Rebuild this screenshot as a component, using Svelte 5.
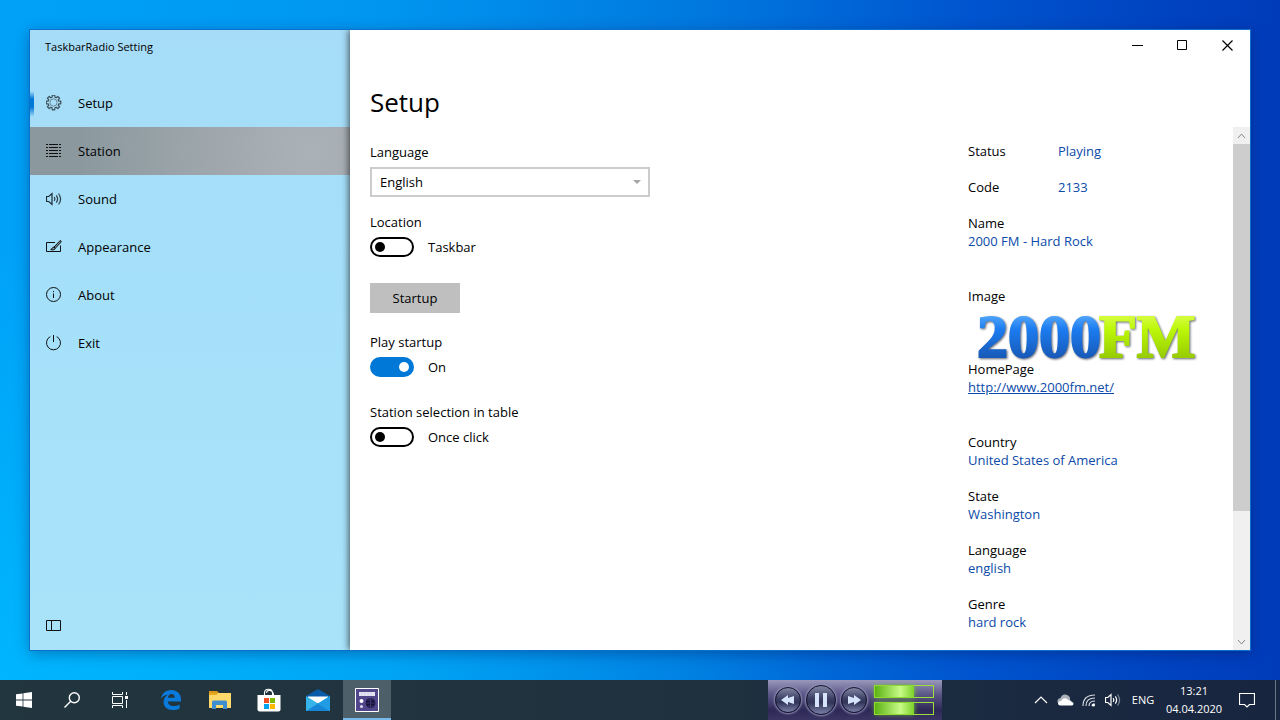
<script>
    let items = [
        { id: "setup", label: "Setup" },
        { id: "station", label: "Station" },
        { id: "sound", label: "Sound" },
        { id: "appearance", label: "Appearance" },
        { id: "about", label: "About" },
        { id: "exit", label: "Exit" }
    ]
    let current = "setup"
    let hovered = "station"
    let language = "English"
    let inTray = false
    let playStartup = true
    let doubleClick = false
    let levels = [68, 68]
    let thumb = 75
    let details = [
        { name: "Country", value: "United States of America" },
        { name: "State", value: "Washington" },
        { name: "Language", value: "english" },
        { name: "Genre", value: "hard rock" }
    ]
    // outline of the eight-toothed gear
    let gear = ""
    for(let i = 0;i < 8;i++){
        for(let [r, a] of [[5.4, -15], [7.4, -10], [7.4, 10], [5.4, 15]]){
            let rad = (i * 45 + a) * Math.PI / 180
            gear += `${(7.5 + r * Math.sin(rad)).toFixed(2)},${(7.5 - r * Math.cos(rad)).toFixed(2)} `
        }
    }
</script>

<div class="desktop">
    <div class="wallpaper">
        <div class="window">
            <aside>
                <div class="caption">TaskbarRadio Setting</div>
                <nav>
                    {#each items as item}
                    <button class="item" class:current={current == item.id} class:hovered={hovered == item.id} on:click={() => current = item.id}>
                        <svg width="16" height="16" viewBox="0 0 16 16" fill="none" stroke="#111">
                            {#if item.id == "setup"}
                            <polygon points={gear} stroke="#3c505c" stroke-width="1.2" stroke-linejoin="round" />
                            <circle cx="7.5" cy="7.5" r="3.6" stroke="#6f8793" />
                            {:else if item.id == "station"}
                            <path d="M0 1.5h2M3 1.5h9M13 1.5h2M0 4.5h2M3 4.5h9M13 4.5h2M0 7.5h2M3 7.5h9M13 7.5h2M0 10.5h2M3 10.5h9M13 10.5h2M0 13.5h2M3 13.5h9M13 13.5h2" />
                            {:else if item.id == "sound"}
                            <path d="M.5 5.5h2.3L6 2.6v10.8L2.8 10.5H.5z" stroke="#1d2b32" stroke-width="1.2" />
                            <path d="M8.2 6.2q1.3 1.8 0 3.6M10.3 4.4q2.6 3.6 0 7.2M12.5 2.5q4.2 5.500 0 11" stroke="#2c3e47" stroke-width="1.200" />
                            {:else if item.id == "appearance"}
                            <path d="M9 3.5H.5v9h14V6.5" />
                            <path d="M14.4 1.3 8 8l1.3 1.3 6-6.5zM8 8c-2 .1-1.5 2-3.3 2.5 1.8.8 4.6.3 4.6-1.2" fill="#74919f" />
                            {:else if item.id == "about"}
                            <circle cx="7.5" cy="7.5" r="7" /><path d="M7.5 6.5V11M7.5 4v1.2" />
                            {:else}
                            <path d="M4.3 1.6a7 7 0 1 0 6.4 0M7.5 0v7" />
                            {/if}
                        </svg>
                        <span>{item.label}</span>
                    </button>
                    {/each}
                </nav>
                <button class="item fold" aria-label="Toggle pane">
                    <svg width="16" height="16" viewBox="0 0 16 16" fill="none" stroke="#111"><path d="M.5 2.5h14v10H.5zM5.5 2.5v10" /></svg>
                </button>
            </aside>

            <main>
                <div class="controls">
                    <button aria-label="Minimize"><svg width="11" height="11" fill="none" stroke="#000"><path d="M0 5.5h11" /></svg></button>
                    <button aria-label="Maximize"><svg width="11" height="11" fill="none" stroke="#000"><path d="M.5.5h9v9h-9z" /></svg></button>
                    <button aria-label="Close"><svg width="11" height="11" fill="none" stroke="#000" stroke-width="1.2"><path d="M.5.5l10 10M10.5.5l-10 10" /></svg></button>
                </div>
                <h1>Setup</h1>
                <div class="body">
                    <form>
                        <div class="field">
                            <label for="language">Language</label>
                            <div class="combo">
                                <select id="language" bind:value={language}>
                                    <option>English</option>
                                    <option>Deutsch</option>
                                </select>
                                <svg width="8" height="4" viewBox="0 0 8 4"><path d="M0 0h8L4 4z" fill="#a6a6a6" /></svg>
                            </div>
                        </div>
                        <div class="field">
                            <label for="location">Location</label>
                            <div class="switch"><input type="checkbox" id="location" bind:checked={inTray}><span>Taskbar</span></div>
                        </div>
                        <div class="action">
                            <button type="button">Startup</button>
                        </div>
                        <div class="field">
                            <label for="play">Play startup</label>
                            <div class="switch"><input type="checkbox" id="play" bind:checked={playStartup}><span>On</span></div>
                        </div>
                        <div class="field">
                            <label for="click">Station selection in table</label>
                            <div class="switch"><input type="checkbox" id="click" bind:checked={doubleClick}><span>Once click</span></div>
                        </div>
                    </form>

                    <dl>
                        <div class="pair"><dt>Status</dt><dd>Playing</dd></div>
                        <div class="pair"><dt>Code</dt><dd>2133</dd></div>
                        <div class="tall"><dt>Name</dt><dd>2000 FM - Hard Rock</dd></div>
                        <div class="picture">
                            <dt>Image</dt>
                            <dd>
                                <svg width="232" height="55" viewBox="0 0 232 55" role="img" aria-label="2000FM">
                                    <defs>
                                        <linearGradient id="blue" x1="0" y1="0" x2="0" y2="1">
                                            <stop offset=".1" stop-color="#6bbaff" />
                                            <stop offset=".4" stop-color="#1c7cf0" />
                                            <stop offset=".85" stop-color="#1757b4" />
                                        </linearGradient>
                                        <linearGradient id="lime" x1="0" y1="0" x2="0" y2="1">
                                            <stop offset=".1" stop-color="#e2ff60" />
                                            <stop offset=".4" stop-color="#bdf808" />
                                            <stop offset=".85" stop-color="#94c800" />
                                        </linearGradient>
                                    </defs>
                                    <text x="9" y="52" fill="url(#blue)" stroke="url(#blue)">2000</text>
                                    <text x="131" y="52" fill="url(#lime)" stroke="url(#lime)">FM</text>
                                </svg>
                            </dd>
                        </div>
                        <div class="tall"><dt>HomePage</dt><dd><a href="http://www.2000fm.net/">http://www.2000fm.net/</a></dd></div>
                        {#each details as d}
                        <div><dt>{d.name}</dt><dd>{d.value}</dd></div>
                        {/each}
                    </dl>

                    <div class="scroll">
                        <button aria-label="Scroll up"><svg width="9" height="6" fill="none" stroke="#888"><path d="M1 5l3.5-4L8 5" /></svg></button>
                        <div class="track"><div class="thumb" style="height: {thumb}%"></div></div>
                        <button aria-label="Scroll down"><svg width="9" height="6" fill="none" stroke="#888"><path d="M1 1l3.5 4L8 1" /></svg></button>
                    </div>
                </div>
            </main>
        </div>
    </div>

    <footer>
        <div class="system">
            <button aria-label="Start">
                <svg width="16" height="16" viewBox="0 0 16 16" fill="#fff"><path d="M0 2.3 6.6 1.4v6.2H0zM7.4 1.2 16 0v7.6H7.4zM0 8.4h6.6v6.2L0 13.7zM7.4 8.4H16V16l-8.6-1.2z" /></svg>
            </button>
            <button aria-label="Search">
                <svg width="16" height="16" viewBox="0 0 16 16" fill="none" stroke="#fff" stroke-width="1.4"><circle cx="10.3" cy="5.7" r="5" /><path d="M6.7 9.3.5 15.5" /></svg>
            </button>
            <button aria-label="Task View">
                <svg width="16" height="16" viewBox="0 0 16 16" fill="none" stroke="#fff"><path d="M.5 0v2.5h10V0M.5 4.5h10v7H.5zM.5 16v-2.5h10V16M14.5 0v3M14.5 8v8" /><path d="M13 4h3v3h-3z" fill="#fff" stroke="none" /></svg>
            </button>
        </div>
        <div class="apps">
            <button aria-label="Edge">
                <svg width="20" height="20" viewBox="0 0 20 20" fill="#0a7bdc"><path d="M0 8.8C.8 3.6 4.6 0 10.2 0 16.5 0 20 4.3 20 9.5v2.1H6.8c.2 3.1 2.8 4.5 5.8 4.5 2.3 0 4.2-.6 6-1.700v4.1c-2 1-4.4 1.5-6.9 1.5-5.2 0-9.1-2.8-9.1-8 0-3 1.8-5.8 4.3-7.2C4.300 4.900 1.500 6.200 0 8.800zM6.900 7.800h6.900c0-2.300-1-3.800-3.300-3.800S7.200 5.800 6.900 7.800z" /></svg>
            </button>
            <button aria-label="File Explorer">
                <svg width="22" height="18" viewBox="0 0 22 18"><path d="M0 0h8l2 2H0z" fill="#d99a16" /><path d="M0 2h22v15H0z" fill="#ffda6b" /><path d="M0 2h9L7.5 4H0z" fill="#e5ab22" /><path d="M3 18V11q0-1.500 1.500-1.500h12q1.500 0 1.500 1.500v7h-4v-4H7v4z" fill="#3f8fd0" /></svg>
            </button>
            <button aria-label="Store">
                <svg width="24" height="24" viewBox="0 0 24 24"><path d="M7.5 8V5q0-3.800 4-3.800t4 3.800v3M9.500 5Q10 2 13 2.500t3.500 4V8" fill="none" stroke="#fff" stroke-width="1.100" /><path d="M.5 7h23v14.500q0 2-2 2h-19q-2 0-2-2z" fill="#fff" /><path d="M7 10h5v5H7z" fill="#f25022" /><path d="M13 10h5v5h-5z" fill="#7fba00" /><path d="M7 16h5v5H7z" fill="#00a4ef" /><path d="M13 16h5v5h-5z" fill="#ffb900" /></svg>
            </button>
            <button aria-label="Mail">
                <svg width="24" height="22" viewBox="0 0 24 22"><path d="M0 7 12 0l12 7v4H0z" fill="#0a5ca8" /><path d="M2 7.500h20V14H2z" fill="#fff" /><path d="M0 7l12 7.500L24 7v15H0z" fill="#36b4ea" /><path d="M0 22 12 14.500 24 22z" fill="#1587d6" /><path d="M12 14.500 24 7v15z" fill="#1f9ce4" /></svg>
            </button>
            <button class="active" aria-label="TaskbarRadio">
                <svg width="24" height="24" viewBox="0 0 24 24"><path d="M.5.5h23v23H.5z" fill="#51458c" stroke="#fff" /><path d="M4 4h16v4H4z" fill="#e4e3f4" /><path d="M7 4v4M10 4v4M13 4v4M16 4v4" stroke="#c4c2de" stroke-width=".6" /><circle cx="6.5" cy="13" r="2" fill="#fff" /><circle cx="6.5" cy="18.500" r="1.500" fill="#d9d8ee" /><circle cx="15.500" cy="15" r="4.800" fill="#17143c" /><path d="M11 15h9M15.500 10.500v9M12.500 12h6M12.500 18h6" stroke="#51458c" stroke-width=".6" /></svg>
            </button>
        </div>

        <div class="player">
            <button class="round" aria-label="Previous"><svg width="14" height="10" fill="#d5e4fa"><path d="M7 0v3l6-2v8L7 7v3L0 5z" /></svg></button>
            <button class="round big" aria-label="Pause"><svg width="14" height="14" fill="#d5e4fa"><path d="M1 0h4v14H1zM9 0h4v14H9z" /></svg></button>
            <button class="round" aria-label="Next"><svg width="14" height="10" fill="#d5e4fa"><path d="M7 0v3L1 1v8l6-2v3l7-5z" /></svg></button>
            <div class="meters">
                {#each levels as level}
                <div class="meter"><div style="width: {level}%"></div></div>
                {/each}
            </div>
        </div>

        <div class="tray">
            <button aria-label="Hidden icons"><svg width="14" height="8" fill="none" stroke="#fff" stroke-width="1.2"><path d="M1 7l6-6 6 6" /></svg></button>
            <button aria-label="OneDrive"><svg width="17" height="12" viewBox="0 0 17 12"><path d="M2 9Q0 9 .5 6.500T3.500 4Q5 0 8.500.500t4.500 3.500v5z" fill="#aab0b8" /><path d="M3.500 11.500Q1 11.500 1 9.500t3-2.500q1.500-3.500 5-2.500 1.500.3 2.500 1.700 3-.2 3.300 1.800 1.900.3 1.700 1.900-.2 1.600-2 1.600z" fill="#fff" /></svg></button>
            <button aria-label="Network"><svg width="14" height="14" viewBox="0 0 14 14" fill="none" stroke="#d5dae0" stroke-width="1.2"><path d="M1 13Q1 2 13 2M4 13Q4 5 13 5M7 13q0-5 6-5M10 13q0-2 3-2" /><circle cx="11.500" cy="12" r="1.500" fill="#fff" stroke="none" /></svg></button>
            <button aria-label="Volume"><svg width="16" height="16" viewBox="0 0 16 16" fill="none" stroke="#fff" stroke-width="1.2"><path d="M.5 5.500h2.300L6 2.600v10.800l-3.200-2.900H.5z" /><path d="M8.200 6.200q1.300 1.800 0 3.600M10.300 4.400q2.600 3.600 0 7.200" /><path d="M12.500 2.500q4.200 5.500 0 11" stroke="#7d8894" /></svg></button>
            <button class="lang">ENG</button>
            <button class="clock"><span>13:21</span><span>04.04.2020</span></button>
            <button class="notes" aria-label="Notifications"><svg width="16" height="16" viewBox="0 0 16 16" fill="none" stroke="#fff" stroke-width="1.2"><path d="M.5 1.500h15v11h-5L8 15l-2.500-2.500h-5z" /></svg></button>
            <button class="peek" aria-label="Show desktop"></button>
        </div>
    </footer>
</div>

<style>
    :global(body){
        margin: 0;
    }
    .desktop{
        min-height: 100vh;
        display: flex;
        flex-direction: column;
        font-family: "Open Sans", "Noto Sans", sans-serif;
        font-size: 13px;
        line-height: 18px;
        color: #000;
    }
    button, select{
        font: inherit;
        color: inherit;
        border: 0;
        padding: 0;
        background: none;
    }
    svg{
        display: block;
        flex: none;
    }
    .wallpaper{
        flex: 1;
        display: flex;
        padding: 30px;
        background:
            radial-gradient(ellipse at 0% 100%, rgba(0,190,255,.7), transparent 45%),
            linear-gradient(to right, #00a2f8 0%, #0096f0 30%, #0078de 55%, #0054cf 76%, #0042c0 92%, #003cba 100%);
    }
    .window{
        flex: 1;
        display: flex;
        box-shadow: 0 0 0 1px #0a70cc, 0 3px 14px rgba(0,20,80,.4);
    }
    aside{
        width: 320px;
        flex: none;
        display: flex;
        flex-direction: column;
        background: linear-gradient(#a6dcf7, #a5e0fa 40%, #a9e3fa);
    }
    .caption{
        height: 34px;
        line-height: 34px;
        padding-left: 15px;
        margin-bottom: 15px;
        font-size: 11px;
    }
    .item{
        width: 100%;
        height: 48px;
        display: flex;
        align-items: center;
        gap: 16px;
        padding-left: 16px;
        text-align: left;
    }
    .current{
        background: linear-gradient(transparent 12px, #0078d7 20px, #0078d7 28px, transparent 38px) left / 4px 100% no-repeat;
    }
    .hovered{
        background: radial-gradient(circle at 280px 24px, #abb2b8 0, #a0a8ad 90px, #8b999f 230px);
    }
    .fold{
        margin-top: auto;
    }
    main{
        flex: 1;
        display: flex;
        flex-direction: column;
        background: #fff;
        box-shadow: -1px 0 7px rgba(0,0,0,.65);
        clip-path: inset(0 0 0 -12px);
    }
    .controls{
        display: flex;
        justify-content: flex-end;
    }
    .controls button{
        width: 45px;
        height: 30px;
        display: grid;
        place-items: center;
    }
    h1{
        margin: 24px 20px 7px;
        font-size: 26px;
        line-height: 36px;
        font-weight: 400;
    }
    .body{
        flex: 1;
        display: flex;
    }
    form{
        flex: 1;
        padding: 16px 20px 0;
    }
    .field{
        height: 70px;
    }
    .field label{
        display: block;
        margin-bottom: 6px;
    }
    .combo{
        position: relative;
        width: 280px;
    }
    .combo select{
        width: 100%;
        height: 30px;
        padding: 0 8px;
        border: 2px solid #ccc;
        border-radius: 0;
        background: #fff;
        appearance: none;
    }
    .combo svg{
        position: absolute;
        right: 9px;
        top: 13px;
        pointer-events: none;
    }
    .switch{
        display: flex;
        align-items: center;
        gap: 14px;
    }
    .switch input{
        appearance: none;
        width: 44px;
        height: 20px;
        margin: 0;
        display: flex;
        align-items: center;
        padding: 0 3px;
        box-sizing: border-box;
        border: 2px solid #000;
        border-radius: 10px;
    }
    .switch input::before{
        content: "";
        width: 10px;
        height: 10px;
        border-radius: 50%;
        background: #000;
    }
    .switch input:checked{
        justify-content: flex-end;
        background: #0078d7;
        border-color: #0078d7;
    }
    .switch input:checked::before{
        background: #fff;
    }
    .action{
        height: 50px;
    }
    .action button{
        width: 90px;
        height: 30px;
        background: #bfbfbf;
    }
    dl{
        width: 265px;
        margin: 0;
        padding-top: 15px;
    }
    dl > div{
        margin-bottom: 18px;
    }
    dl > .tall{
        margin-bottom: 37px;
    }
    dl > .picture{
        margin-bottom: 0;
    }
    dl > .pair{
        display: flex;
    }
    .pair dt{
        width: 90px;
    }
    dd{
        margin: 0;
        color: #0b4aa8;
    }
    dd a{
        color: inherit;
    }
    .picture svg{
        overflow: visible;
        filter: drop-shadow(1px 1px 1px rgba(60,65,80,.8));
    }
    .picture text{
        font-family: "Liberation Serif", serif;
        font-weight: 700;
        font-size: 62px;
        stroke-width: 2px;
    }
    .scroll{
        width: 17px;
        display: flex;
        flex-direction: column;
        background: #f0f0f0;
    }
    .scroll button{
        height: 17px;
        display: grid;
        place-items: center;
    }
    .track{
        flex: 1;
    }
    .thumb{
        background: #cdcdcd;
    }
    footer{
        height: 40px;
        display: flex;
        color: #fff;
        background: linear-gradient(to right, #22363f, #1f313e 55%, #1a2940 80%, #18253f);
    }
    footer button{
        display: grid;
        place-items: center;
    }
    .system, .apps, .tray{
        display: flex;
    }
    .system button, .apps button{
        width: 48px;
    }
    .apps{
        gap: 1px;
        margin-left: 3px;
    }
    .apps .active{
        background: #4d5f69;
        box-shadow: inset 0 -2px #76b9ed;
    }
    .player{
        width: 174px;
        margin-left: auto;
        display: flex;
        align-items: center;
        gap: 5px;
        padding: 0 8px 0 7px;
        box-sizing: border-box;
        background: linear-gradient(#9a98bc, #5d5888 35%, #2e2856 75%, #3b3564);
    }
    .round{
        flex: none;
        width: 26px;
        height: 26px;
        border-radius: 50%;
        border: 1px solid #17142f;
        background: linear-gradient(#8286a4, #3b3f64 45%, #323558 60%, #7980a8);
        box-shadow: 0 0 2px 1px #8e8fb5;
    }
    .big{
        width: 30px;
        height: 30px;
    }
    .meters{
        flex: 1;
        display: grid;
        gap: 4px;
        margin-left: 2px;
    }
    .meter{
        height: 11px;
        border: 1px solid #9be03a;
    }
    .meter div{
        height: 100%;
        background: linear-gradient(to right, #5cb314, #c8fa88 65%, #7bd12a);
        box-shadow: 0 0 5px #7bd12a;
    }
    .tray{
        margin-left: 87px;
        font-size: 11px;
    }
    .tray button{
        width: 24px;
    }
    .tray .lang{
        width: 36px;
    }
    .tray .clock{
        width: 66px;
        align-content: center;
    }
    .tray .notes{
        width: 40px;
    }
    .tray .peek{
        width: 5px;
        margin-left: 8px;
        border-left: 1px solid #6d7689;
    }
</style>
